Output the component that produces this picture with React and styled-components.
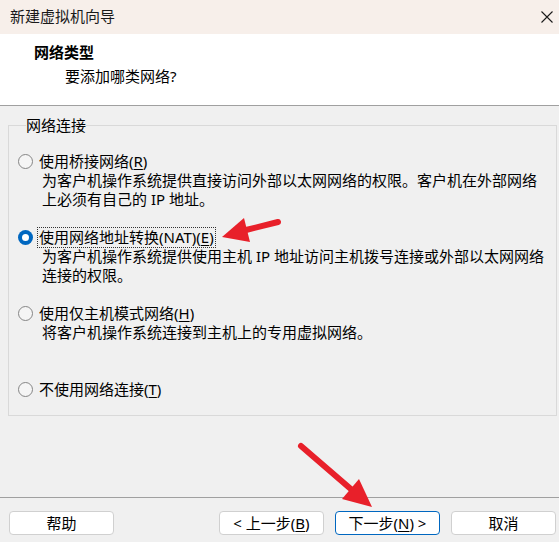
import React from "react";
import styled, { createGlobalStyle } from "styled-components";

const Global = createGlobalStyle`
  html, body { margin: 0; padding: 0; background: #f0f0f0; }
  * { box-sizing: border-box; }
`;

const FONT = `"Noto Sans", "Noto Sans CJK SC", sans-serif`;

const Window = styled.div`
  position: relative;
  width: 559px;
  height: 542px;
  display: flex;
  flex-direction: column;
  background: #f0f0f0;
  font-family: ${FONT};
  font-size: 15px;
  color: #000;
  overflow: hidden;
`;

const TitleBar = styled.div`
  height: 34px;
  flex: none;
  display: flex;
  align-items: center;
  justify-content: space-between;
  padding: 0 6px 0 10px;
  background: #f7efea;
  color: #1a1a1a;
`;

const TitleText = styled.span`
  line-height: 20px;
  margin-top: -2px;
`;

const CloseButton = styled.span`
  display: flex;
  width: 12px;
  height: 12px;
`;

const Header = styled.div`
  flex: none;
  height: 72px;
  background: #fff;
  border-bottom: 1px solid #a0a0a0;
  padding-top: 8px;
`;

const HeaderTitle = styled.div`
  padding-left: 34px;
  font-weight: 700;
  line-height: 20px;
`;

const HeaderSub = styled.div`
  padding-left: 65px;
  margin-top: 4px;
  line-height: 20px;
`;

const Body = styled.div`
  flex: 1;
  padding-top: 10px;
`;

const Group = styled.fieldset`
  margin: 0 2px 0 8px;
  padding: 17px 0 16px 9px;
  border: 1px solid #d9d9d9;
  min-inline-size: 0;
`;

const Legend = styled.legend`
  margin-left: 8px;
  padding: 0;
  line-height: 19px;
`;

const Options = styled.div`
  display: flex;
  flex-direction: column;
  gap: 19px;
`;

const Option = styled.div`
  display: flex;
  flex-direction: column;
`;

const RadioRow = styled.div`
  display: flex;
  align-items: center;
  height: 19px;
  gap: 4px;
`;

const RadioCircle = styled.span`
  flex: none;
  width: 15px;
  height: 15px;
  border-radius: 50%;
  display: flex;
  align-items: center;
  justify-content: center;
  border: ${(p) => (p.$checked ? "none" : "1px solid #858585")};
  background: ${(p) => (p.$checked ? "#0067c0" : "#f5f5f5")};
  &::after {
    content: "";
    display: ${(p) => (p.$checked ? "block" : "none")};
    width: 7px;
    height: 7px;
    border-radius: 50%;
    background: #fff;
  }
`;

const RadioLabel = styled.span`
  padding: 0 1px;
  line-height: 19px;
  border: 1px dotted ${(p) => (p.$focused ? "#333" : "transparent")};
  white-space: nowrap;
`;

const Desc = styled.div`
  padding-left: 24px;
  line-height: 19px;
  min-height: 38px;
  white-space: nowrap;
`;

const Key = styled.span`
  text-decoration: underline;
  text-underline-offset: 2px;
`;

const Footer = styled.div`
  flex: none;
  height: 45px;
  border-top: 1px solid #a0a0a0;
  padding: 13px 3px 0 9px;
  display: flex;
  justify-content: space-between;
  align-items: flex-start;
`;

const ButtonGroup = styled.div`
  display: flex;
  gap: 11px;
`;

const Button = styled.button`
  width: 105px;
  height: 24px;
  padding: 0;
  border-radius: 4px;
  background: #fff;
  border: 1px solid ${(p) => (p.$primary ? "#0067c0" : "#d0d0d0")};
  font-family: ${FONT};
  font-size: 15px;
  line-height: 20px;
  color: #000;
  display: flex;
  align-items: center;
  justify-content: center;
`;

const Overlay = styled.svg`
  position: absolute;
  left: 0;
  top: 0;
  pointer-events: none;
`;

const options = [
  {
    label: "使用桥接网络(",
    key: "R",
    desc: [
      "为客户机操作系统提供直接访问外部以太网网络的权限。客户机在外部网络",
      "上必须有自己的 IP 地址。",
    ],
  },
  {
    label: "使用网络地址转换(NAT)(",
    key: "E",
    checked: true,
    desc: [
      "为客户机操作系统提供使用主机 IP 地址访问主机拨号连接或外部以太网网络",
      "连接的权限。",
    ],
  },
  {
    label: "使用仅主机模式网络(",
    key: "H",
    desc: ["将客户机操作系统连接到主机上的专用虚拟网络。"],
  },
  { label: "不使用网络连接(", key: "T" },
];

export default function App() {
  return (
    <>
      <Global />
      <Window>
        <TitleBar>
          <TitleText>新建虚拟机向导</TitleText>
          <CloseButton>
            <svg width="12" height="12" viewBox="0 0 12 12">
              <path d="M0.5 0.5 L11.5 11.5 M11.5 0.5 L0.5 11.5" stroke="#1a1a1a" strokeWidth="1.1" />
            </svg>
          </CloseButton>
        </TitleBar>
        <Header>
          <HeaderTitle>网络类型</HeaderTitle>
          <HeaderSub>要添加哪类网络?</HeaderSub>
        </Header>
        <Body>
          <Group>
            <Legend>网络连接</Legend>
            <Options>
              {options.map((o) => (
                <Option key={o.key}>
                  <RadioRow>
                    <RadioCircle $checked={o.checked} />
                    <RadioLabel $focused={o.checked}>
                      {o.label}
                      <Key>{o.key}</Key>)
                    </RadioLabel>
                  </RadioRow>
                  {o.desc && (
                    <Desc>
                      {o.desc.map((line, i) => (
                        <div key={i}>{line}</div>
                      ))}
                    </Desc>
                  )}
                </Option>
              ))}
            </Options>
          </Group>
        </Body>
        <Footer>
          <Button>帮助</Button>
          <ButtonGroup>
            <Button>
              &lt; 上一步(<Key>B</Key>)
            </Button>
            <Button $primary>
              下一步(<Key>N</Key>) &gt;
            </Button>
            <Button>取消</Button>
          </ButtonGroup>
        </Footer>
        <Overlay width="559" height="542" viewBox="0 0 559 542">
          <line x1="278" y1="222" x2="246" y2="230" stroke="#e8202a" strokeWidth="6" strokeLinecap="round" />
          <polygon points="222,237 244,218 250,242" fill="#e8202a" />
          <line x1="301" y1="446" x2="352" y2="490" stroke="#e8202a" strokeWidth="6" strokeLinecap="round" />
          <polygon points="372,507 342,499 359,479" fill="#e8202a" />
        </Overlay>
      </Window>
    </>
  );
}
